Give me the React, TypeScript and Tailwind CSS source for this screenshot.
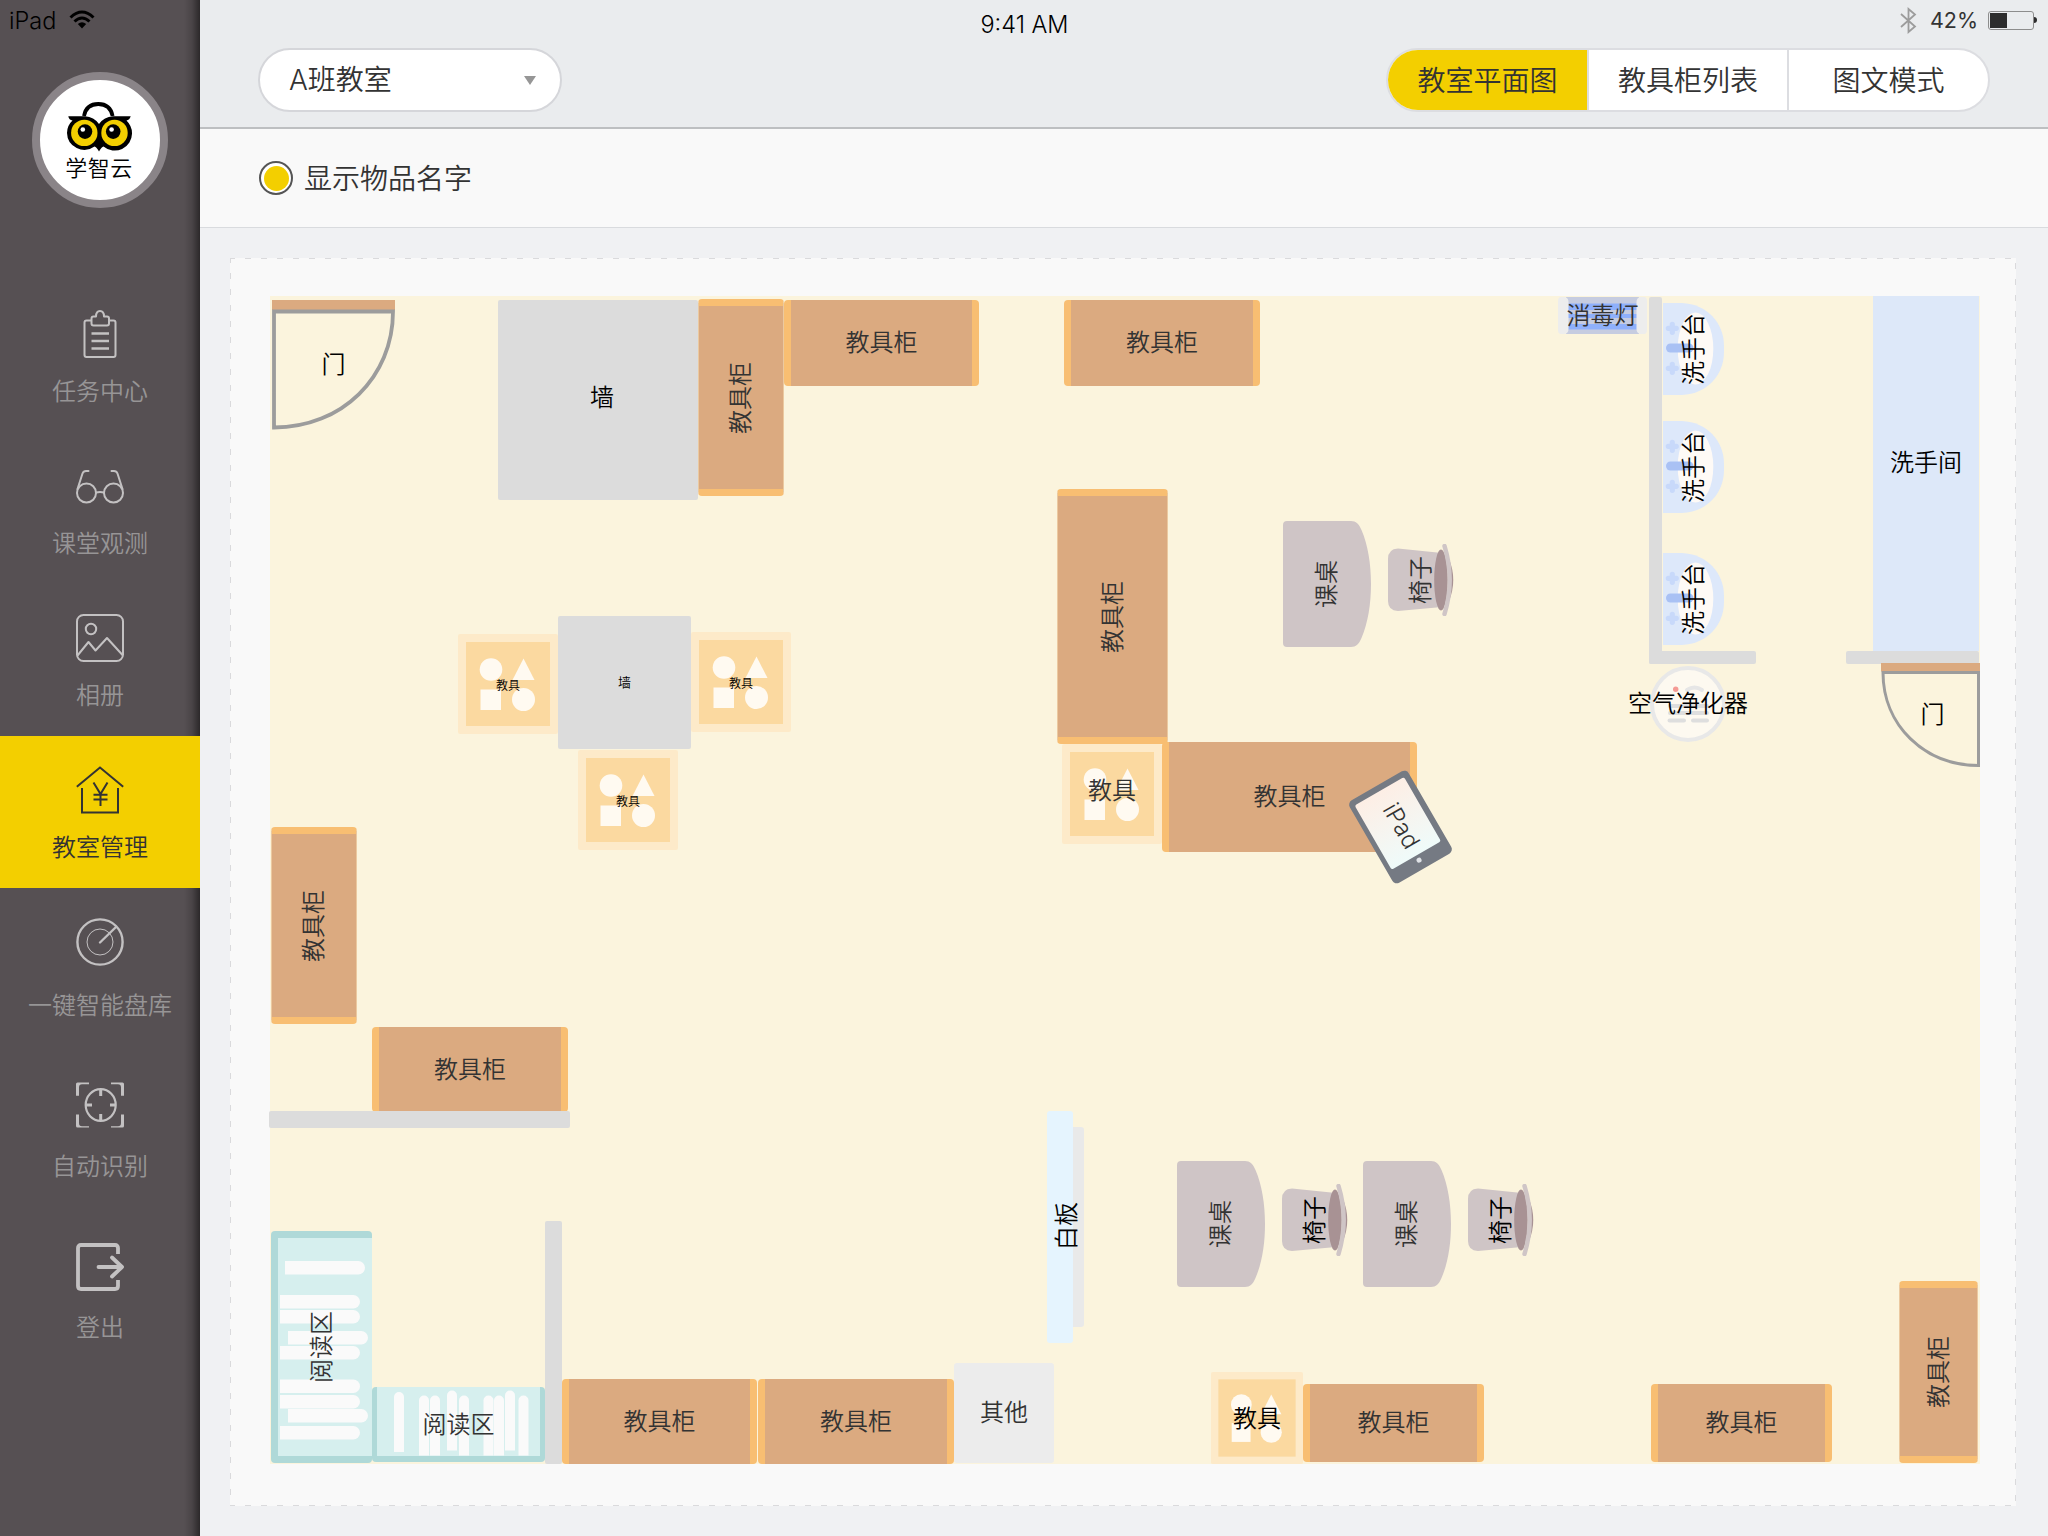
import React from "react";

type Box = { x: number; y: number; w: number; h: number };

/* Top-left corner of the floor, in page coordinates. */
const ORIGIN = { x: 270, y: 296 };

/* ---------- Sidebar ---------- */

const ClipboardIcon = () => (
  <svg width="48" height="48" viewBox="0 0 48 48" fill="none" stroke="currentColor" strokeWidth="2" strokeLinejoin="round">
    <path d="M16 10.500H10.500Q8.500 10.500 8.500 12.500V45Q8.500 47 10.500 47H37.500Q39.500 47 39.500 45V12.500Q39.500 10.500 37.500 10.500H32" />
    <path d="M17.500 6.500H20Q20 1 24 1T28 6.500H31Q33 6.500 33 8.500V13.500Q33 15.500 31 15.500H17.500Q15.500 15.500 15.500 13.500V8.500Q15.500 6.500 17.500 6.500Z" />
    <path d="M15.500 23.500H33M15.500 31H33M15.500 38.500H33" strokeWidth="2.400" />
  </svg>
);

const GlassesIcon = () => (
  <svg width="48" height="48" viewBox="0 0 48 48" fill="none" stroke="currentColor" strokeWidth="2" strokeLinecap="round">
    <circle cx="10.500" cy="31" r="9.500" />
    <circle cx="37.500" cy="31" r="9.500" />
    <path d="M20 30.500Q24 29.300 28 30.500" />
    <path d="M1.500 27L6.500 11.500Q7.500 9 10 9H12.500M46.500 27L41.500 11.500Q40.500 9 38 9H35.500" />
  </svg>
);

const PhotoIcon = () => (
  <svg width="48" height="48" viewBox="0 0 48 48" fill="none" stroke="currentColor" strokeWidth="2" strokeLinejoin="round">
    <rect x="1" y="1" width="46" height="46" rx="6.500" />
    <circle cx="15" cy="15" r="5.200" />
    <path d="M1.500 41.500L12.500 28L19.500 36.500L31 24L46.500 41" />
  </svg>
);

const HouseIcon = () => (
  <svg width="48" height="48" viewBox="0 0 48 48" fill="none" stroke="currentColor" strokeWidth="2">
    <path d="M0.800 20.800L24 1.500L47.200 20.800" />
    <path d="M6 22V46.500H42V22" />
    <path d="M17.500 16.500L24.500 28L31.500 16.500M24.500 28V40M17.500 28.800H31.500M17.500 33.500H31.500" />
  </svg>
);

const RadarIcon = () => (
  <svg width="48" height="48" viewBox="0 0 48 48" fill="none" stroke="currentColor" strokeWidth="2.400">
    <circle cx="24" cy="24" r="22.600" />
    <circle cx="24" cy="24" r="13" strokeWidth="1" />
    <path d="M24 24.500L40 9" strokeLinecap="round" />
  </svg>
);

const ScanIcon = () => (
  <svg width="48" height="48" viewBox="0 0 48 48" fill="none" stroke="currentColor" strokeWidth="2.400">
    <ellipse cx="24.700" cy="24" rx="15" ry="15.800" strokeWidth="2.200" />
    <path d="M24.700 9V15M24.700 33V39M10 24H16M34 24H40" strokeWidth="3" />
    <path fill="currentColor" stroke="none" d="M0 14.800V3Q0 1.500 1.500 1.500H13V3.300H6Q3 3.300 3 6.500V14.800ZM48 14.800V3Q48 1.500 46.500 1.500H35V3.300H42Q45 3.300 45 6.500V14.800ZM0 33.500V45Q0 46.500 1.500 46.500H13V45.300H6Q3 45.300 3 42V33.500ZM48 33.500V45Q48 46.500 46.500 46.500H35V45.300H42Q45 45.300 45 42V33.500Z" />
  </svg>
);

const LogoutIcon = () => (
  <svg width="48" height="48" viewBox="0 0 48 48" fill="none" stroke="currentColor" strokeWidth="3.800" strokeLinejoin="round">
    <path d="M42 11V5Q42 2 39 2H5Q2 2 2 5V43Q2 46 5 46H39Q42 46 42 43V37" />
    <path d="M22.500 24H45M36 14.500L46 24L36 33.500" strokeLinecap="round" />
  </svg>
);

const Logo = () => (
  <div className="flex h-[136px] w-[136px] flex-col items-center rounded-full border-8 border-[#8a8488] bg-white pt-[21px] pr-[2px]">
    <svg width="66" height="51" viewBox="66 101 66 51">
      <path d="M84 116C85.500 108 91 104 98.300 104S111 108 112.600 116" fill="none" stroke="#000" strokeWidth="3.800" />
      <path d="M68.300 116.300H85Q94 117 99 124Q104 117 113 116.300H130.700Q129.500 120 126.500 120.500Q132 126 132 133A17.300 17.300 0 0 1 103.500 146.500Q101.500 147 99 151.500Q96.500 147 94.500 146.500A17.300 17.300 0 0 1 67 133Q67 125.500 72.500 120.500Q69 120 68.300 116.300Z" />
      <circle cx="84.300" cy="132.900" r="13.200" fill="#f3cf00" />
      <circle cx="114.500" cy="132.900" r="13.200" fill="#f3cf00" />
      <circle cx="85" cy="131.600" r="7.300" />
      <circle cx="113.200" cy="131.600" r="7.300" />
      <circle cx="82.800" cy="129.500" r="2.300" fill="#fff" />
      <circle cx="111.600" cy="129.500" r="2.300" fill="#fff" />
    </svg>
    <div className="pt-[3px] text-[22px] leading-[22px] tracking-[0.5px] text-black">学智云</div>
  </div>
);

const NAV = [
  { label: "任务中心", Icon: ClipboardIcon, cls: "h-[152px] gap-[19.5px]" },
  { label: "课堂观测", Icon: GlassesIcon, cls: "h-[152px] gap-[19.5px]" },
  { label: "相册", Icon: PhotoIcon, cls: "h-[152px] gap-[19.5px]" },
  { label: "教室管理", Icon: HouseIcon, cls: "h-[152px] gap-[19.5px]", active: true },
  { label: "一键智能盘库", Icon: RadarIcon, cls: "h-[163px] gap-[26px]" },
  { label: "自动识别", Icon: ScanIcon, cls: "h-[162px] gap-6" },
  { label: "登出", Icon: LogoutIcon, cls: "h-[152px] gap-[23px]" },
];

const Sidebar = () => (
  <aside className="flex w-[200px] shrink-0 flex-col items-center gap-[72px] bg-[#565053] bg-[linear-gradient(90deg,transparent_184px,rgba(0,0,0,0.15)_192px,rgba(0,0,0,0.5)_200px)] pt-[72px]">
    <Logo />
    <nav className="flex w-full flex-col">
      {NAV.map(({ label, Icon, cls, active }) => (
        <div
          key={label}
          className={`flex flex-col items-center pt-[30px] ${cls} ${active ? "bg-[#f3cf00] text-[#333333]" : "text-[#c3c1c2]"}`}
        >
          <Icon />
          <span className={`text-2xl leading-6 whitespace-nowrap ${active ? "text-[#333333]" : "text-[#979596]"}`}>{label}</span>
        </div>
      ))}
    </nav>
  </aside>
);

/* ---------- Status bar and header ---------- */

const StatusBar = () => (
  <div className="absolute inset-x-0 top-0 grid grid-cols-3 items-start pt-[6px] pr-[11px] pl-[9px] font-['Inter','Liberation_Sans',sans-serif] text-black">
    <div className="flex items-start gap-[13px] pt-px">
      <span className="text-[23.5px] leading-7">iPad</span>
      <svg className="mt-[3px]" width="26" height="19" viewBox="0 0 26 19" fill="none" stroke="#000" strokeWidth="3">
        <path d="M1.500 7.500Q13 -3.500 24.500 7.500" />
        <path d="M5.500 11.500Q13 4.500 20.500 11.500" />
        <path d="M13 18.500L8.800 14Q13 10.500 17.200 14Z" fill="#000" stroke="none" />
      </svg>
    </div>
    <div className="pt-[5px] pl-[3px] text-center text-[23.5px] leading-7">9:41 AM</div>
    <div className="flex items-center justify-end text-[#333333]">
      <svg width="17" height="27" viewBox="0 0 17 27" fill="none" stroke="#9c9c9c" strokeWidth="1.800">
        <path d="M1 7L15 19.500L8.500 25V2L15 7.500L1 20" />
      </svg>
      <span className="pr-[10px] pl-[13px] text-[21.500px] leading-7 font-normal">42%</span>
      <div className="h-[19px] w-[46px] rounded-[3px] border border-[#8d8d8d] p-px">
        <div className="h-[15px] w-[17px] bg-[#2d2d2d]" />
      </div>
      <div className="h-[6px] w-[3px] rounded-r-full bg-[#2d2d2d]" />
    </div>
  </div>
);

const TABS = [
  { label: "教室平面图", cls: "w-[199px] bg-[#f3cf00]" },
  { label: "教具柜列表", cls: "w-[200px] border-l-2 border-[#dcdde1]" },
  { label: "图文模式", cls: "flex-1 border-l-2 border-[#dcdde1]" },
];

const Header = () => (
  <header className="flex h-[129px] items-start justify-between border-b-2 border-[#bdbfc1] bg-[#eaecee] px-[58px] pt-12 text-[28px] text-[#333333]">
    <div className="flex h-16 w-[304px] items-center justify-between rounded-full border-2 border-[#d5d6da] bg-white pr-6 pl-[29px]">
      <span className="pb-[2px] leading-10">
        <span className="font-['Inter',sans-serif]">A</span>班教室
      </span>
      <svg width="12" height="9" viewBox="0 0 12 9">
        <path d="M0 0H12L6 9Z" fill="#969696" />
      </svg>
    </div>
    <div className="flex h-16 w-[604px] overflow-hidden rounded-full border-2 border-[#dcdde1] bg-white">
      {TABS.map(({ label, cls }) => (
        <div key={label} className={`flex items-center justify-center pb-[2px] ${cls}`}>
          {label}
        </div>
      ))}
    </div>
  </header>
);

const OptionBar = () => (
  <div className="flex h-[99px] items-center gap-[11px] border-b border-[#d9dbde] bg-[#f9f9f9] pl-[59px]">
    <div className="flex h-[34px] w-[34px] items-center justify-center rounded-full border-2 border-[#555555] bg-white">
      <div className="h-[25px] w-[25px] rounded-full bg-[#f3cf00]" />
    </div>
    <span className="pb-[2px] text-[28px] text-[#333333]">显示物品名字</span>
  </div>
);

/* ---------- Furniture ---------- */

type ItemProps = Box & {
  label?: string;
  vertical?: boolean;
  dark?: boolean;
  text?: string;
  cls?: string;
  children?: React.ReactNode;
};

/* One piece of furniture on the floor, its name centred over its drawing. */
const Item = ({ x, y, w, h, label, vertical, dark, text = "text-2xl pb-1", cls = "", children }: ItemProps) => (
  <div
    className={`absolute flex items-center justify-center ${cls}`}
    style={{ left: x - ORIGIN.x, top: y - ORIGIN.y, width: w, height: h }}
  >
    {children}
    {label && (
      <span
        className={`relative shrink-0 leading-none whitespace-nowrap ${text} ${dark ? "text-black" : "text-[#333333]"} ${
          vertical ? "-rotate-90" : ""
        }`}
      >
        {label}
      </span>
    )}
  </div>
);

const Art = ({ viewBox, children }: { viewBox: string; children: React.ReactNode }) => (
  <svg className="absolute inset-0 size-full" viewBox={viewBox} fill="none">
    {children}
  </svg>
);

const Cabinet = ({ vertical, ...box }: Box & { vertical?: boolean }) => (
  <Item
    {...box}
    label="教具柜"
    vertical={vertical}
    cls={`rounded-[4px] bg-[#dbaa80] ${
      vertical ? "border-x border-y-[7px] border-x-[#ebc9a0] border-y-[#f8be72]" : "border-x-[7px] border-[#f8be72]"
    }`}
  />
);

const Wall = ({ cls = "", ...item }: ItemProps) => <Item {...item} dark cls={`rounded-[2px] bg-[#dcdcdc] ${cls}`} />;

const ToyBox = ({ x, y, size = 100, ...rest }: { x: number; y: number; size?: number; dark?: boolean; text?: string; label?: string }) => (
  <Item x={x} y={y} w={size} h={size} {...rest}>
    <Art viewBox="0 0 100 100">
      <rect width="100" height="100" rx="2" fill="#fdeac9" />
      <rect x="8" y="8" width="84" height="84" fill="#fbd9a0" />
      <g fill="#fffaf1">
        <circle cx="33" cy="35.500" r="11.300" />
        <path d="M65.500 24.500L76.500 46H54.500Z" />
        <rect x="22.500" y="55.500" width="20.500" height="20.500" />
        <circle cx="65.500" cy="65.500" r="11.500" />
      </g>
    </Art>
  </Item>
);

const Desk = ({ x, y }: { x: number; y: number }) => (
  <Item x={x} y={y} w={88} h={126} label="课桌" vertical>
    <Art viewBox="0 0 88 126">
      <path d="M4 0H68C73 0 76 3 78.500 9C85 24 88 43 88 63S85 102 78.500 117C76 123 73 126 68 126H4Q0 126 0 122V4Q0 0 4 0Z" fill="#cfc5c6" />
    </Art>
  </Item>
);

const Chair = ({ x, y, dark }: { x: number; y: number; dark?: boolean }) => (
  <Item x={x} y={y} w={66} h={72} label="椅子" vertical dark={dark}>
    <Art viewBox="0 0 66 72">
      <path d="M10 4.500L54 9V63L10 67Q0 66.500 0 57V15Q0 5 10 4.500Z" fill="#cfc5c6" />
      <path d="M61 15Q69.500 36 61 57Z" fill="#a89294" />
      <ellipse cx="53" cy="36" rx="6.800" ry="30.500" fill="#a89294" />
      <path d="M56.500 2Q67 36 56.500 70" stroke="#cfc5c6" strokeWidth="4.400" strokeLinecap="round" />
    </Art>
  </Item>
);

const Sink = ({ y }: { y: number }) => (
  <Item x={1663} y={y} w={61} h={92} label="洗手台" vertical dark cls="pl-px">
    <Art viewBox="0 0 61 92">
      <path d="M0 0H19C44 1 61 20 61 43V49C61 72 44 91 19 92H0Z" fill="#dde8fa" />
      <ellipse cx="32.500" cy="45.600" rx="17.800" ry="36" fill="#fefaf6" />
      <path d="M7.500 45H26" stroke="#a9c1f4" strokeWidth="9" strokeLinecap="round" />
      <path d="M9.300 21.300V29.300M5.300 25.300H13.300M9.300 61.300V69.300M5.300 65.300H13.300" stroke="#c8d9fa" strokeWidth="5.200" strokeLinecap="round" />
    </Art>
  </Item>
);

/* Shelf seen from above; every book is [inset, offset along the shelf]. */
const ROWS = [[14, 30], [9, 64], [9, 79], [17, 100], [9, 115], [9, 148.5], [9, 164], [17, 178], [9, 195]];
const COLUMNS = [[22, 5], [47, 8.5], [58, 8.5], [75, 3.5], [87, 8.5], [111.5, 8.5], [122, 8.5], [133, 3.5], [146.5, 8.5]];

const ReadingShelves = () => (
  <>
    <Item x={271} y={1231} w={101} h={232} label="阅读区" vertical>
      <Art viewBox="0 0 101 232">
        <rect width="101" height="232" rx="4" fill="#afd9d8" />
        <rect x="7" y="7" width="94" height="218" fill="#d6efee" />
        {ROWS.map(([x, y]) => (
          <path key={y} d={`M${x} ${y}h73.250a6.750 6.750 0 0 1 0 13.500h-73.250z`} fill="#fafafa" />
        ))}
      </Art>
    </Item>
    <Item x={372} y={1387} w={173} h={75} label="阅读区">
      <Art viewBox="0 0 173 75">
        <rect width="173" height="75" rx="4" fill="#afd9d8" />
        <rect x="5" width="163" height="69" fill="#d6efee" />
        {COLUMNS.map(([x, y]) => (
          <path key={x} d={`M${x} ${y + 60}v-55a5 5 0 0 1 10 0v55z`} fill="#fafafa" />
        ))}
      </Art>
    </Item>
  </>
);

const DoorLeft = () => (
  <Item x={272} y={300} w={123} h={130} label="门" dark>
    <Art viewBox="0 0 123 130">
      <rect width="123" height="10" fill="#dbaa80" />
      <path d="M2 11.500H121C121 77 70 127.500 2 127.500Z" stroke="#9c9c9c" strokeWidth="3.800" />
    </Art>
  </Item>
);

const DoorRight = () => (
  <Item x={1881} y={663} w={99} h={104} label="门" dark cls="pl-1">
    <Art viewBox="0 0 99 104">
      <rect width="99" height="8.500" fill="#dbaa80" />
      <path d="M97.500 9.500H2C2 62 43 102.500 97.500 102.500Z" stroke="#9c9c9c" strokeWidth="3" />
    </Art>
  </Item>
);

const UvLamp = () => (
  <Item x={1558} y={297} w={89} h={37} label="消毒灯">
    <Art viewBox="0 0 89 37">
      <rect x="8" width="73" height="37" fill="#c6cce0" />
      <rect x="9" y="6.500" width="71" height="6.500" fill="#8fb0fb" />
      <rect x="9" y="17" width="71" height="4" fill="#8fb0fb" />
      <rect x="9" y="27" width="71" height="5.500" fill="#8fb0fb" />
      <path d="M3 0H7Q10.500 1 10.500 5V32Q10.500 36 7 37H3Q0 37 0 33V4Q0 0 3 0ZM86 0H82Q78.500 1 78.500 5V32Q78.500 36 82 37H86Q89 37 89 33V4Q89 0 86 0Z" fill="#ededed" />
    </Art>
  </Item>
);

const Purifier = () => (
  <Item x={1650} y={666} w={76} h={76} label="空气净化器" dark>
    <Art viewBox="0 0 76 76">
      <circle cx="38" cy="38" r="36" fill="#fdf9f0" stroke="#e8e8e8" strokeWidth="4" />
      <circle cx="25.700" cy="23.300" r="2.700" fill="#f59a94" />
      <path d="M37 24Q44.500 19 52 24" stroke="#e6e6e6" strokeWidth="4" strokeLinecap="round" />
      <path d="M20 40H57M20 47H57M19.500 54.500H34M43 54.500H57" stroke="#dedede" strokeWidth="4" strokeLinecap="round" />
    </Art>
  </Item>
);

const Whiteboard = () => (
  <Item x={1047} y={1111} w={37} h={232} label="白板" vertical dark cls="pb-[2px] pl-[2px]">
    <Art viewBox="0 0 37 232">
      <rect x="20" y="16" width="17" height="200" rx="3" fill="#e9e9e9" />
      <rect width="26" height="232" rx="3" fill="#e5f4fe" />
    </Art>
  </Item>
);

const Tablet = () => (
  <Item
    x={1353}
    y={793}
    w={95}
    h={68}
    cls="rotate-60 gap-[3px] rounded-[5px] bg-[#757a83] pr-[2px]"
  >
    <div className="flex h-[57px] w-[74px] items-center justify-center rounded-[2px] bg-linear-to-r from-[#fdeee5] to-[#effbfa] pb-[2px] pl-[9px] font-['Inter','Liberation_Sans',sans-serif] text-2xl leading-none text-[#333333]">
      iPad
    </div>
    <div className="h-[5px] w-[5px] rounded-full bg-[#dfe2e6]" />
  </Item>
);

const SMALL = "text-xs pt-px";

const FloorPlan = () => (
  <div className="relative h-[1168px] w-[1710px] bg-[#fbf4dd]">
    <DoorLeft />
    <Wall x={498} y={300} w={200} h={200} label="墙" cls="pb-1 pl-2" />
    <Cabinet vertical x={698} y={299} w={86} h={197} />
    <Cabinet x={784} y={300} w={195} h={86} />
    <Cabinet x={1064} y={300} w={196} h={86} />

    <ToyBox x={458} y={634} label="教具" dark text={SMALL} />
    <ToyBox x={691} y={632} label="教具" dark text={SMALL} />
    <ToyBox x={578} y={750} label="教具" dark text={SMALL} />
    <Wall x={558} y={616} w={133} h={133} label="墙" text="text-[13px] pb-[2px]" />

    <ToyBox x={1062} y={744} />
    <Cabinet vertical x={1057} y={489} w={111} h={255} />
    <Cabinet x={1162} y={742} w={255} h={110} />
    <Item x={1062} y={741} w={100} h={100} label="教具" />
    <Tablet />
    <Desk x={1283} y={521} />
    <Chair x={1388} y={544} />

    <Item x={1873} y={296} w={106} h={355} label="洗手间" dark cls="bg-[#dde8f9] pb-[22px]" />
    <UvLamp />
    <Wall x={1649} y={297} w={13} h={367} />
    <Wall x={1649} y={651} w={107} h={13} />
    <Wall x={1846} y={651} w={133} h={13} />
    <Sink y={302.5} />
    <Sink y={420.5} />
    <Sink y={552.5} />
    <DoorRight />
    <Purifier />

    <Cabinet vertical x={271} y={827} w={86} h={197} />
    <Cabinet x={372} y={1027} w={196} h={85} />
    <Wall x={269} y={1111} w={301} h={17} />
    <ReadingShelves />
    <Wall x={545} y={1221} w={17} h={243} />
    <Cabinet x={562} y={1379} w={195} h={85} />
    <Cabinet x={758} y={1379} w={196} h={85} />
    <Item x={954} y={1363} w={100} h={100} label="其他" cls="rounded-[3px] bg-[#ececec]" />

    <Whiteboard />
    <Desk x={1177} y={1161} />
    <Chair x={1282} y={1184} dark />
    <Desk x={1363} y={1161} />
    <Chair x={1468} y={1184} dark />

    <ToyBox x={1211} y={1372} size={92} label="教具" dark text="text-2xl pb-[3px]" />
    <Cabinet x={1303} y={1384} w={181} h={78} />
    <Cabinet x={1651} y={1384} w={181} h={78} />
    <Cabinet vertical x={1899} y={1281} w={79} h={182} />
  </div>
);

/* Dashed frame, 6px strokes on a 16px pitch. */
const DashedFrame = () => (
  <>
    <div className="absolute inset-x-0 top-0 h-px bg-[repeating-linear-gradient(90deg,#dadadc_0_5px,transparent_5px_15px,#dadadc_15px_16px)]" />
    <div className="absolute inset-x-0 bottom-0 h-px bg-[repeating-linear-gradient(90deg,#dadadc_0_5px,transparent_5px_15px,#dadadc_15px_16px)]" />
    <div className="absolute inset-y-0 left-0 w-px bg-[repeating-linear-gradient(180deg,#dadadc_0_5px,transparent_5px_15px,#dadadc_15px_16px)]" />
    <div className="absolute inset-y-0 right-0 w-px bg-[repeating-linear-gradient(180deg,transparent_0_5px,#dadadc_5px_11px,transparent_11px_16px)]" />
  </>
);

export default function App() {
  return (
    <div className="relative flex h-[1536px] w-[2048px] overflow-hidden bg-[#f0f1f3] font-['Noto_Sans_CJK_SC','Noto_Sans',sans-serif] font-[350]">
      <Sidebar />
      <main className="flex flex-1 flex-col">
        <Header />
        <OptionBar />
        <div className="flex flex-1 items-start p-[30px]">
          <section className="relative flex h-[1248px] w-[1786px] items-start bg-[#f9f9f9] pt-[38px] pl-10">
            <DashedFrame />
            <FloorPlan />
          </section>
        </div>
      </main>
      <StatusBar />
    </div>
  );
}
